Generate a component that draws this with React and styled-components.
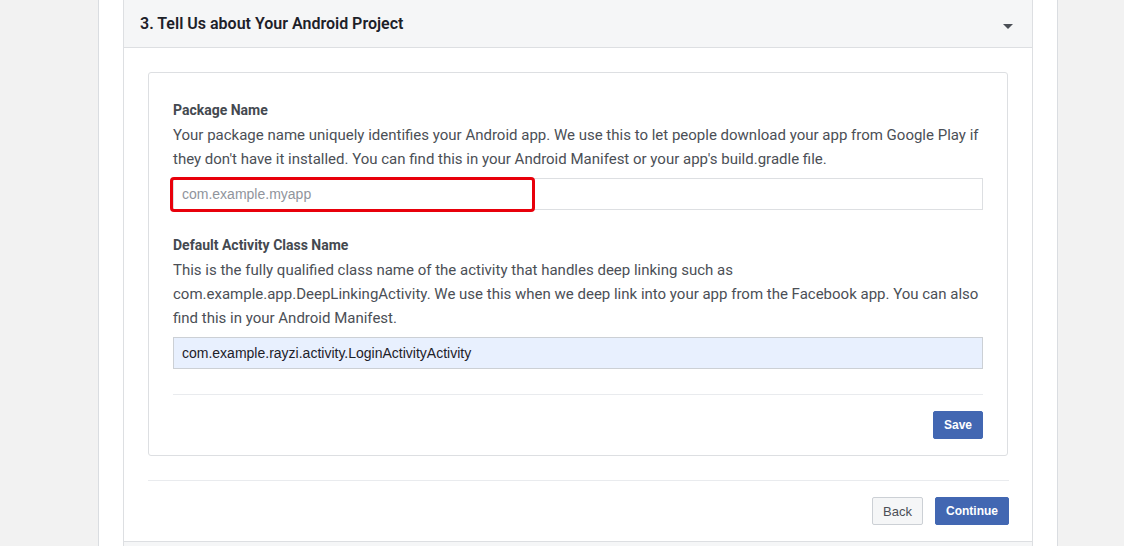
import React from 'react'
import styled, { createGlobalStyle } from 'styled-components'

const GlobalStyle = createGlobalStyle`
    body {
        margin: 0;
        background: #f2f2f2;
        font-family: Roboto, "Liberation Sans", Arial, sans-serif;
        overflow: hidden;
    }
`

export default function App() {
    return (
        <>
            <GlobalStyle />
            <Page>
                <Column>
                    <Card>
                        <Header>
                            <h2>3. Tell Us about Your Android Project</h2>
                            <Caret />
                        </Header>
                        <Body>
                            <Panel>
                                <Field>
                                    <Label>Package Name</Label>
                                    <Help>
                                        Your package name uniquely identifies your Android app. We use this to let people download your app from Google Play if they don't have it installed. You can find this in your Android Manifest or your app's build.gradle file.
                                    </Help>
                                    <InputWrap>
                                        <Input placeholder="com.example.myapp" />
                                        <Highlight />
                                    </InputWrap>
                                </Field>
                                <Field>
                                    <Label>Default Activity Class Name</Label>
                                    <Help>
                                        This is the fully qualified class name of the activity that handles deep linking such as com.example.app.DeepLinkingActivity. We use this when we deep link into your app from the Facebook app. You can also find this in your Android Manifest.
                                    </Help>
                                    <InputWrap>
                                        <Input filled defaultValue="com.example.rayzi.activity.LoginActivityActivity" />
                                    </InputWrap>
                                </Field>
                                <PanelFooter>
                                    <Button primary>Save</Button>
                                </PanelFooter>
                            </Panel>
                            <Footer>
                                <Button>Back</Button>
                                <Button primary>Continue</Button>
                            </Footer>
                        </Body>
                    </Card>
                    <Card>
                        <NextHeader />
                    </Card>
                </Column>
            </Page>
        </>
    )
}

const Page = styled.div`
    min-height: 100vh;
    padding-left: 98px;
`
const Column = styled.div`
    width: 910px;
    min-height: 100vh;
    padding: 0 24px;
    background: #fff;
    border-left: 1px solid #dadde1;
    border-right: 1px solid #dadde1;
`
const Card = styled.div`
    border: 1px solid #dddfe2;
    & + & {
        border-top: none;
    }
`
const Header = styled.div`
    height: 47px;
    display: flex;
    align-items: center;
    justify-content: space-between;
    padding: 0 19px 0 16px;
    background: #f5f6f7;
    border-bottom: 1px solid #dddfe2;
    margin-top: -1px;
    h2 {
        margin: 0;
        font-size: 16px;
        font-weight: 600;
        color: #1d2129;
    }
`
const NextHeader = styled.div`
    height: 47px;
    background: #f5f6f7;
    border-bottom: 1px solid #dddfe2;
`
const Caret = styled.span`
    width: 0;
    height: 0;
    border-left: 5px solid transparent;
    border-right: 5px solid transparent;
    border-top: 5px solid #4b4f56;
    margin-top: 6px;
`
const Body = styled.div`
    padding: 24px 24px 16px;
`
const Panel = styled.div`
    border: 1px solid #dddfe2;
    border-radius: 3px;
    padding: 28px 24px 16px;
`
const Field = styled.div`
    & + & {
        margin-top: 26px;
    }
`
const Label = styled.div`
    font-size: 14px;
    line-height: 18px;
    font-weight: 700;
    color: #444950;
`
const Help = styled.p`
    margin: 4px 0 7px;
    font-size: 15px;
    line-height: 24px;
    color: #4b4f56;
`
const InputWrap = styled.div`
    position: relative;
`
const Input = styled.input`
    display: block;
    box-sizing: border-box;
    width: 100%;
    height: 32px;
    padding: 0 8px;
    font-family: "Liberation Sans", Arial, sans-serif;
    font-size: 14px;
    color: #1d2129;
    border: 1px solid ${p => (p.filled ? '#ccd0d5' : '#dddfe2')};
    background: ${p => (p.filled ? '#e8f0fe' : '#fff')};
    outline: none;
    &::placeholder {
        color: #90949c;
    }
`
const Highlight = styled.div`
    position: absolute;
    left: -3px;
    top: -1px;
    width: 365px;
    height: 35px;
    box-sizing: border-box;
    border: 3px solid #e8000b;
    border-radius: 4px;
    pointer-events: none;
`
const PanelFooter = styled.div`
    margin-top: 25px;
    padding-top: 16px;
    border-top: 1px solid #e9ebee;
    display: flex;
    justify-content: flex-end;
`
const Button = styled.button`
    box-sizing: border-box;
    height: 28px;
    padding: 0 10px;
    border-radius: 2px;
    font-family: "Liberation Sans", Arial, sans-serif;
    font-size: ${p => (p.primary ? '12px' : '13px')};
    font-weight: ${p => (p.primary ? 700 : 400)};
    color: ${p => (p.primary ? '#fff' : '#4b4f56')};
    background: ${p => (p.primary ? '#4267b2' : '#f5f6f7')};
    border: 1px solid ${p => (p.primary ? '#4267b2' : '#ccd0d5')};
    cursor: pointer;
`
const Footer = styled.div`
    margin-top: 24px;
    padding-top: 16px;
    border-top: 1px solid #e9ebee;
    display: flex;
    justify-content: flex-end;
    gap: 12px;
    margin-right: -1px;
`
